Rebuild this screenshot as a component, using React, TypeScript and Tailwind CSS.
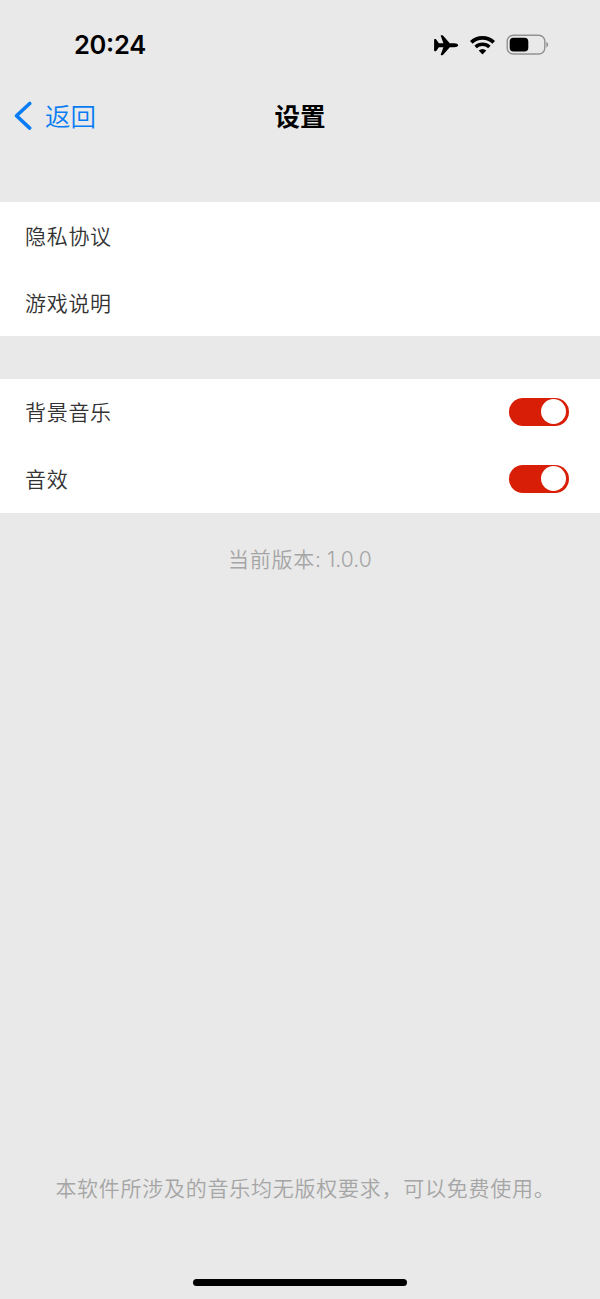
import { useState } from "react";

function StatusIcons() {
  return (
    <svg className="block" width="118" height="24" viewBox="432 33 118 24" aria-hidden="true">
      <path
        d="M458.200 45.200c0 1.200-2 2-4 2h-4.400l-6.400 7.300c-.4.500-.7.700-1.200.7h-.9c-.5 0-.7-.4-.5-.9l2.600-7.100h-4.500l-2.700 3.700c-.2.300-.5.400-.8.400h-.6c-.5 0-.7-.3-.7-.8v-10.600c0-.5.2-.8.7-.8h.6c.3 0 .6.100.8.400l2.700 3.700h4.500l-2.600-7.100c-.2-.5 0-.9.500-.9h.9c.5 0 .8.200 1.200.7l6.400 7.300h4.400c2 0 4 .8 4 2z"
        fill="#000"
      />
      <path d="M471.300 42.300a16.200 16.200 0 0 1 22.400 0" fill="none" stroke="#000" strokeWidth="3.800" />
      <path d="M475.600 47.100a10 10 0 0 1 13.800 0" fill="none" stroke="#000" strokeWidth="3.500" />
      <path d="M478.700 50.600a5.700 5.700 0 0 1 7.600 0l-3.300 3.300q-.5.500-1 0z" fill="#000" />
      <rect x="507.200" y="35.200" width="37.600" height="18.800" rx="6" fill="none" stroke="#929292" strokeWidth="1.400" />
      <path d="M546.300 41.800c2.400 1 2.400 4.700 0 5.700z" fill="#929292" />
      <rect x="509.700" y="37.700" width="18.600" height="13.800" rx="3.800" fill="#000" />
    </svg>
  );
}

function Toggle({ label }: { label: string }) {
  const [on, setOn] = useState(true);
  return (
    <button
      role="switch"
      aria-checked={on}
      aria-label={label}
      onClick={() => setOn(!on)}
      className={`flex h-7 w-[60px] items-center rounded-full px-[3px] ${on ? "justify-end bg-[#d81e06]" : "justify-start bg-gray-300"}`}
    >
      <span className="size-[25px] rounded-full bg-white" />
    </button>
  );
}

function Row({ label, toggle = false }: { label: string; toggle?: boolean }) {
  return (
    <div className="flex h-[67px] items-center justify-between pr-[31px] pb-px pl-[25px]">
      <span className="text-[21px] font-[350] tracking-[0.700px] text-[#333333]">{label}</span>
      {toggle && <Toggle label={label} />}
    </div>
  );
}

export default function App() {
  return (
    <div className="flex h-[1299px] w-[600px] flex-col bg-[#e9e9e9] font-['Noto_Sans_CJK_SC',sans-serif]">
      <header className="flex h-[90px] items-center justify-between pr-[50px] pl-[74px]">
        <span className="font-['Inter',sans-serif] text-[25.500px] font-semibold tracking-[-0.300px] [font-feature-settings:'case']">20:24</span>
        <StatusIcons />
      </header>
      <nav className="grid h-[52px] grid-cols-3 items-center">
        <button className="flex items-center gap-[13px] pl-[14px] text-[25.500px] font-[350] text-[#087cf5]">
          <svg width="18" height="30" viewBox="0 0 18 30" fill="none" stroke="currentColor" strokeWidth="3.600" strokeLinecap="round" strokeLinejoin="round" aria-hidden="true">
            <path d="M15.700 2.500 2.500 14.800l13.200 12.300" />
          </svg>
          <span className="pb-px">返回</span>
        </button>
        <h1 className="pb-px text-center text-[25.500px] font-bold">设置</h1>
      </nav>
      <main className="flex flex-1 flex-col pt-[60.400px]">
        <section className="bg-white">
          <Row label="隐私协议" />
          <Row label="游戏说明" />
        </section>
        <section className="mt-[42.200px] bg-white">
          <Row label="背景音乐" toggle />
          <Row label="音效" toggle />
        </section>
        <p className="mt-[29.500px] text-center text-[21px] leading-[32px] font-[350] tracking-[0.700px] text-[#a5a5a5]">
          当前版本<span className="font-['Inter',sans-serif] text-[21px] tracking-[0.100px] font-[350]">: 1.0.0</span>
        </p>
        <p className="mt-auto mb-[76px] pl-[11px] text-center text-[21px] leading-[32px] font-[350] tracking-[0.750px] whitespace-nowrap text-[#a5a5a5]">
          本软件所涉及的音乐均无版权要求，可以免费使用。
        </p>
      </main>
      <div className="mb-[13px] h-[7px] w-[214px] shrink-0 self-center rounded-full bg-black" />
    </div>
  );
}
